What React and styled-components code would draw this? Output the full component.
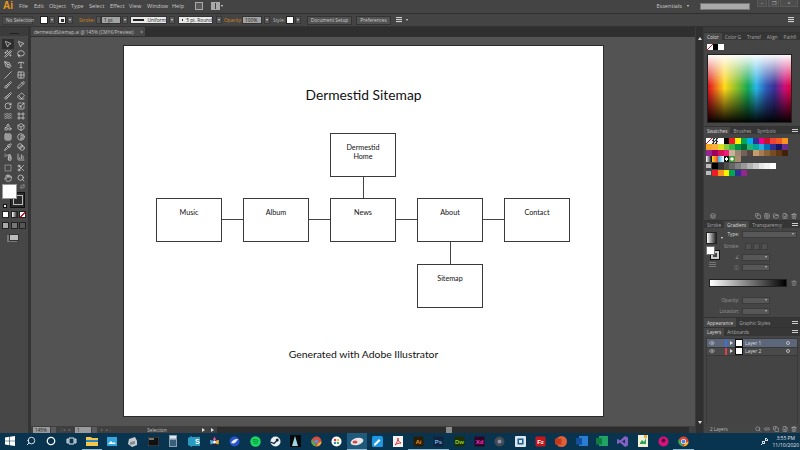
import React from "react";
import styled, { createGlobalStyle } from "styled-components";
import {
  MousePointer2, Wand2, Lasso, PenTool, Type, Slash, Grid2x2, Brush, Pencil, Eraser, RotateCw, Scaling,
  Waves, Frame, Shapes, Box, Grid3x3, Blend, Pipette, Contrast, SprayCan, ChartColumn, SquareDashed,
  Scissors, Hand, Search, Trash2, FilePlus, FolderOpen, Eye, Link2, Layers, Copy, Repeat,
} from "lucide-react";

const Global = createGlobalStyle`
  html, body { margin: 0; padding: 0; width: 800px; height: 450px; overflow: hidden; background: #444; }
  * { box-sizing: border-box; }
  #root { width: 800px; height: 450px; font-family: "Open Sans", "Liberation Sans", sans-serif; }
`;

const Shell = styled.div`display:flex;flex-direction:column;width:800px;height:450px;`;
const MenuBar = styled.div`display:flex;align-items:center;height:14px;background:#444;color:#c9c9c9;font-size:5.6px;border-bottom:1px solid #2f2f2f;padding-bottom:1px;`;
const Logo = styled.span`width:12px;margin:0 4px 0 3px;color:#e8951e;font-family:"Liberation Sans",sans-serif;font-weight:700;font-size:10px;line-height:10px;`;
const MenuItem = styled.span`width:${p => p.$w}px;white-space:nowrap;`;
const MenuIcon = styled.span`display:block;margin-left:${p => p.$ml}px;width:${p => p.$w}px;height:8px;border:1px solid #aaa;background:${p => p.$split ? "linear-gradient(90deg,#aaa 45%,#444 45%,#444 55%,#aaa 55%)" : "#5a5a5a"};`;
const Dot = styled.span`display:block;margin-left:${p => p.$ml || 1}px;width:0;height:0;border-top:2px solid #ddd;border-left:1.5px solid transparent;border-right:1.5px solid transparent;`;
const Spacer = styled.div`flex:1;`;
const SearchBox = styled.span`display:block;margin-left:11px;width:50px;height:7px;background:#a9a9a9;border:1px solid #777;`;
const WinButtons = styled.div`display:flex;gap:1px;align-self:flex-start;margin:0 2px 0 7px;`;
const WinBtn = styled.span`display:flex;align-items:center;justify-content:center;width:${p => p.$w}px;height:7px;background:#4d4d4d;border:1px solid #5a5a5a;border-top:0;color:#bbb;font-size:5px;line-height:5px;`;

const ControlBar = styled.div`display:flex;align-items:center;height:13px;background:#444;color:#c9c9c9;font-size:4.8px;border-bottom:1px solid #333;padding-left:2px;white-space:nowrap;`;
const Selection = styled.span`display:flex;align-items:center;padding-left:3px;width:31px;height:9px;background:#4b4b4b;border:1px solid #3a3a3a;color:#ccc;`;
const Swatch = styled.span`display:block;margin-left:${p => p.$ml}px;width:8px;height:8px;background:#fff;border:1px solid #222;`;
const StrokeSwatch = styled(Swatch)`background:#333;box-shadow:inset 0 0 0 1px #eee;border:1px solid #222;display:flex;align-items:center;justify-content:center;&::after{content:"";width:3px;height:3px;background:#333;border:1px solid #eee;}`;
const Drop = styled.span`display:flex;align-items:center;justify-content:center;margin-left:${p => p.$ml ?? 1}px;width:6px;height:8px;background:#575757;border:1px solid #383838;&::after{content:"";border-top:2px solid #ddd;border-left:1.5px solid transparent;border-right:1.5px solid transparent;}`;
const OrangeLabel = styled.span`margin-left:${p => p.$ml}px;width:${p => p.$w}px;color:#d9861f;`;
const PlainLabel = styled.span`margin-left:${p => p.$ml}px;width:${p => p.$w}px;color:#bbb;`;
const Spinner = styled.span`display:block;margin-left:${p => p.$ml}px;width:5px;height:8px;background:#575757;border:1px solid #383838;`;
const Field = styled.span`display:flex;align-items:center;padding-left:2px;margin-left:${p => p.$ml}px;width:${p => p.$w}px;height:8px;background:${p => p.$light ? "#e8e8e8" : "#a3a3a3"};color:#222;border:1px solid #333;`;
const StrokeLine = styled.span`display:block;width:17px;height:2px;background:#222;margin-right:3px;`;
const RoundDot = styled.span`display:block;width:2px;height:2px;border-radius:50%;background:#111;margin:0 3px 0 1px;`;
const Btn = styled.span`display:flex;align-items:center;justify-content:center;margin-left:${p => p.$ml}px;width:${p => p.$w}px;height:9px;background:#515151;border:1px solid #343434;color:#ccc;`;
const SmallGlyph = styled.span`display:block;margin-left:${p => p.$ml}px;margin-right:${p => p.$mr || 0}px;width:6px;height:6px;background:repeating-linear-gradient(#ccc 0 1px,#555 1px 2px);`;

const Main = styled.div`display:flex;height:406px;`;
const Toolbox = styled.div`width:31px;background:#474747;border-right:3px solid #343434;display:flex;flex-direction:column;align-items:center;`;
const ToolGrip = styled.div`width:28px;height:9px;background:#3b3b3b;display:flex;justify-content:center;align-items:flex-end;padding-bottom:2px;margin-bottom:3px;&::after{content:"";width:9px;height:1px;background:#222;}`;
const ToolGrid = styled.div`display:grid;grid-template-columns:13px 13px;grid-auto-rows:10.3px;align-items:center;justify-items:center;`;
const ToolCell = styled.span`display:flex;align-items:center;justify-content:center;width:12px;height:10px;background:${p => p.$on ? "#2d2d2d" : "transparent"};color:#d2d2d2;`;
const FillStack = styled.div`position:relative;width:24px;height:24px;margin-top:1px;`;
const FillBox = styled.span`position:absolute;left:0;top:0;width:15px;height:15px;background:#fff;border:1px solid #999;z-index:1;`;
const StrokeBox = styled.span`position:absolute;left:8px;top:8px;width:15px;height:16px;background:#2a2a2a;border:1px solid #111;display:flex;align-items:center;justify-content:center;&::after{content:"";width:8px;height:8px;border:1px solid #bbb;background:#2a2a2a;}`;
const SwapGlyph = styled.span`position:absolute;right:1px;top:0;color:#ccc;display:flex;`;
const DefaultGlyph = styled.span`position:absolute;left:1px;bottom:0;width:4px;height:4px;background:#eee;border:1px solid #111;`;
const ModeRow = styled.div`display:flex;gap:1.500px;margin-top:${p => p.$mt}px;`;
const ModeBtn = styled.span`display:block;width:7px;height:7px;background:${p => p.$bg};border:1px solid #222;`;
const ScreenBtn = styled.span`display:block;width:10px;height:7px;margin-top:5px;background:#bbb;border:1px solid #333;box-shadow:-2px 1px 0 #777;`;

const Center = styled.div`width:664px;display:flex;flex-direction:column;`;
const TabStrip = styled.div`height:9px;background:#2f2f2f;display:flex;`;
const DocTab = styled.div`display:flex;align-items:center;justify-content:space-between;width:114px;padding:0 2px 0 3px;background:#484848;color:#c5c5c5;font-size:4.7px;white-space:nowrap;`;
const Canvas = styled.div`flex:1;background:#535353;border-top:1px solid #303030;display:flex;justify-content:flex-start;padding:9px 0 0 93px;`;
const Page = styled.div`position:relative;width:479px;height:370px;background:#fff;box-shadow:0 0 0 1px #2b2b2b;color:#111;font-family:"Lato","Open Sans",sans-serif;`;
const Heading = styled.div`position:absolute;left:0;width:100%;top:${p => p.$y}px;text-align:center;font-size:${p => p.$s}px;line-height:1.2;`;
const Node = styled.div`position:absolute;left:${p => p.$x}px;top:${p => p.$y}px;width:66px;height:44px;border:1px solid #3a3a3a;background:#fff;padding-top:${p => p.$pt}px;text-align:center;font-size:7.2px;line-height:9px;white-space:pre-line;`;
const Wire = styled.div`position:absolute;left:${p => p.$x}px;top:${p => p.$y}px;width:${p => p.$w}px;height:${p => p.$h}px;background:#444;`;
const Status = styled.div`display:flex;align-items:center;height:7px;background:#3f3f3f;color:#c5c5c5;font-size:4.6px;`;
const StatusField = styled.span`display:flex;align-items:center;margin-left:${p => p.$ml}px;padding-left:2px;width:${p => p.$w}px;height:6px;background:#9a9a9a;color:#222;`;
const StatusDrop = styled.span`display:block;margin-left:1px;width:5px;height:6px;background:#5a5a5a;`;
const Nav = styled.span`margin-left:${p => p.$ml}px;width:${p => p.$w}px;color:#777;font-size:4px;letter-spacing:1px;`;
const StatusLabel = styled.span`margin-left:${p => p.$ml}px;width:${p => p.$w}px;text-align:center;`;
const HScroll = styled.div`position:relative;flex:1;height:6px;background:#2c2c2c;margin:0 6px 0 3px;`;
const Thumb = styled.span`position:absolute;left:${p => p.$x}px;top:0;width:6px;height:6px;background:#8a8a8a;`;
const Tri = styled.span`display:block;margin-left:${p => p.$ml}px;width:0;height:0;border-left:3px solid #ddd;border-top:2px solid transparent;border-bottom:2px solid transparent;`;

const VScroll = styled.div`width:8px;background:#303030;border-left:1px solid #3b3b3b;display:flex;flex-direction:column;align-items:center;justify-content:space-between;padding:10px 0 9px;`;
const TriUp = styled.span`display:block;width:0;height:0;border-bottom:3px solid #ddd;border-left:2px solid transparent;border-right:2px solid transparent;`;
const TriDown = styled.span`display:block;width:0;height:0;border-top:3px solid #ddd;border-left:2px solid transparent;border-right:2px solid transparent;`;

const Dock = styled.div`width:97px;background:#3a3a3a;display:flex;flex-direction:column;padding-left:1px;`;
const DockHead = styled.div`height:5px;background:#3b3b3b;`;
const Panel = styled.div`display:flex;flex-direction:column;height:${p => p.$h}px;background:#454545;border-top:1px solid #333;`;
const Tabs = styled.div`display:flex;align-items:stretch;height:${p => p.$h || 7}px;background:#363636;font-size:4.7px;color:#aaa;flex:none;`;
const TabItem = styled.span`display:flex;align-items:center;padding:0 3px;white-space:nowrap;background:${p => p.$on ? "#484848" : "transparent"};color:${p => p.$on ? "#ddd" : "#a8a8a8"};`;
const Burger = styled.span`margin:auto 2px auto auto;width:6px;height:4px;background:repeating-linear-gradient(#ccc 0 1px,transparent 1px 2px);`;
const ChipRow = styled.div`display:flex;margin:4px 0 4px 3px;`;
const Chip = styled.span`display:block;width:5.5px;height:6px;background:${p => p.$c};`;
const NoneChip = styled(Chip)`background:linear-gradient(135deg,#fff 42%,#e01020 42%,#e01020 58%,#fff 58%);`;
const Spectrum = styled.div`width:85px;height:69px;margin-left:3px;border:1px solid #222;
  background:
    linear-gradient(180deg,rgba(255,255,255,.97) 0%,rgba(255,255,255,0) 46%,rgba(0,0,0,0) 50%,rgba(0,0,0,.97) 100%),
    linear-gradient(90deg,#e0101f 0%,#ffd81a 20%,#7fbd2e 36%,#12a857 48%,#29b6e8 58%,#2f5bb8 70%,#3a2f95 80%,#c8107a 92%,#e8003c 100%);`;
const SwatchArea = styled.div`padding:4px 0 0 2px;display:flex;flex-direction:column;gap:.3px;flex:1;`;
const SwatchRow = styled.div`display:flex;margin-top:${p => p.$mt || 0}px;`;
const Cell = styled.span`display:block;width:5.85px;height:5.7px;background:${p => p.$c};`;
const Folder = styled.span`display:block;width:5px;height:4px;margin:1px .85px 0 0;background:#bbb;`;
const PanelFoot = styled.div`display:flex;align-items:center;gap:3px;height:9px;padding:0 3px 0 6px;color:#bbb;flex:none;`;
const FootLabel = styled.span`font-size:4.6px;color:#bbb;margin-right:auto;`;

const GradBody = styled.div`display:flex;flex:1;`;
const GradLeft = styled.div`width:25px;padding:4px 0 0 2px;display:flex;flex-direction:column;`;
const ThumbRow = styled.div`display:flex;align-items:center;gap:3px;`;
const GradThumb = styled.span`display:block;width:11px;height:12px;background:linear-gradient(90deg,#fff,#222);border:1px solid #222;`;
const FillPair = styled.div`position:relative;height:14px;margin-top:2px;`;
const PairFill = styled.span`position:absolute;left:0;top:0;width:9px;height:9px;background:#fff;border:1px solid #777;z-index:1;`;
const PairStroke = styled.span`position:absolute;left:5px;top:5px;width:8px;height:8px;border:2px solid #ccc;outline:1px solid #111;`;
const FlipGlyph = styled.span`display:block;width:7px;height:6px;margin:2px 0 0 3px;background:repeating-linear-gradient(#777 0 1px,#454545 1px 2px);`;
const GradRight = styled.div`flex:1;display:flex;flex-direction:column;font-size:4.6px;color:#a5a5a5;`;
const GradRow = styled.div`display:flex;align-items:center;height:${p => p.$h}px;`;
const GLabel = styled.span`display:flex;justify-content:flex-end;width:10px;margin-right:3px;white-space:nowrap;color:${p => p.$c || "#999"};`;
const GSelect = styled.span`display:flex;justify-content:flex-end;align-items:center;padding-right:2px;width:${p => p.$w}px;height:7px;background:#575757;border:1px solid #3b3b3b;&::after{content:"";border-top:2px solid #bbb;border-left:1.5px solid transparent;border-right:1.5px solid transparent;}`;
const StrokeBtn = styled.span`display:block;width:7px;height:7px;margin-right:1px;background:#515151;border:1px solid #3c3c3c;`;
const StrokeGap = styled.span`display:block;width:3px;`;
const GradBarRow = styled.div`display:flex;align-items:center;margin:0 0 0 -20px;height:21px;color:#999;gap:4px;`;
const GradBar = styled.span`display:block;width:78px;height:8px;border:1px solid #222;background:linear-gradient(90deg,#fff,#000);`;

const LayerList = styled.div`flex:1;margin:2px 2px 0 2px;border:1px solid #3a3a3a;border-bottom:0;background:#444;`;
const LayerRow = styled.div`display:flex;align-items:center;height:8.5px;background:${p => p.$on ? "#5c6779" : "#4a4a4a"};border-bottom:1px solid #383838;color:#ddd;font-size:4.8px;`;
const EyeCell = styled.span`display:flex;justify-content:center;width:9px;color:#ccc;`;
const Bar = styled.span`display:block;width:2px;height:100%;margin-left:9px;background:${p => p.$c};`;
const Thumbnail = styled.span`display:block;width:8px;height:8px;margin:0 2px 0 2px;background:#fff;border:1px solid #111;`;
const Ring = styled.span`display:block;width:4px;height:4px;margin:0 7px 0 auto;border:1px solid #bbb;border-radius:50%;`;

const Taskbar = styled.div`display:flex;align-items:center;height:17px;background:#08344f;color:#e3e3e3;`;
const TaskSlot = styled.span`display:flex;align-items:center;justify-content:center;width:20.42px;height:17px;flex:none;background:${p => p.$active ? "#1f5a7c" : "transparent"};border-bottom:1px solid ${p => p.$open ? "#8fb8cf" : "transparent"};`;
const Tray = styled.span`display:flex;margin:0 3px 0 auto;`;
const Clock = styled.div`margin:0 1px 0 0;text-align:center;font-size:5px;line-height:7px;white-space:nowrap;`;

const Tile = ({ bg, fg = "#fff", t, r = 1 }) => (
  <svg width="11" height="11" viewBox="0 0 11 11"><rect x=".5" y=".5" width="10" height="10" rx={r} fill={bg} />{t && <text x="5.5" y="7.8" fontSize="6" fontFamily="Liberation Sans" fontWeight="700" textAnchor="middle" fill={fg}>{t}</text>}</svg>
);

const taskIcons = [
  <svg width="10" height="10" viewBox="0 0 10 10"><path d="M0 1.4 4.3.8v3.9H0zM4.9.7 10 0v4.7H4.9zM0 5.3h4.3v3.9L0 8.6zM4.9 5.3H10V10l-5.1-.7z" fill="#fff" /></svg>,
  <Search size={10} color="#fff" style={{ transform: "scaleX(-1)" }} />,
  <svg width="10" height="10" viewBox="0 0 10 10"><circle cx="5" cy="5" r="3.7" fill="none" stroke="#fff" strokeWidth="1.3" /></svg>,
  <svg width="11" height="10" viewBox="0 0 11 10"><path d="M3 2h5v6H3zM1 3h1v4H1zM9 3h1v4H9z" fill="none" stroke="#dce6ec" /></svg>,
  <svg width="12" height="11" viewBox="0 0 12 11"><path d="M0 1h5l1 1h6v8H0z" fill="#f4c64a" /><rect y="4" width="12" height="2" fill="#2a86c8" /></svg>,
  <svg width="10" height="9" viewBox="0 0 10 9"><rect width="10" height="9" fill="#35a5dd" /><path d="M1 7l3-3 2 2 1-1 2 2z" fill="#fff" /></svg>,
  <svg width="11" height="11" viewBox="0 0 11 11"><path d="M2 3l6-2 2 4v4l-5 2-4-3z" fill="#c7ccd0" /><path d="M3 6l5-1v3l-5 1z" fill="#7f8a92" /></svg>,
  <svg width="11" height="9" viewBox="0 0 11 9"><rect width="11" height="9" fill="#111" stroke="#999" strokeWidth=".5" /><path d="M1 2h5" stroke="#ddd" strokeWidth="1" /></svg>,
  <svg width="8" height="12" viewBox="0 0 8 12"><rect width="8" height="12" fill="#8aa0ae" /><rect x="1" y="1" width="6" height="2.5" fill="#dfe8ec" /><path d="M1 5h6v6H1z" fill="#38607a" /></svg>,
  <svg width="12" height="11" viewBox="0 0 12 11"><path d="M0 2 4 0v11L0 9zM4 1h8v9H4z" fill="#2a9bc0" /><text x="7" y="8" fontSize="7" fill="#fff" fontFamily="Liberation Sans" fontWeight="700">S</text></svg>,
  <svg width="11" height="11" viewBox="0 0 22 22"><circle cx="11" cy="11" r="10" fill="#202a44" /><path d="M11 1l3 6-3 3-3-3z" fill="#d85bb0" /><path d="M2 8l6 1 1 6-6 2z" fill="#4fb0d8" /><path d="M20 8l-6 1-1 6 6 2z" fill="#e9b640" /><circle cx="11" cy="12" r="3" fill="#fff" /></svg>,
  <svg width="11" height="11" viewBox="0 0 22 22"><circle cx="11" cy="11" r="10" fill="#2b54c8" /><path d="M4 14c4-8 10-8 15-8-3 2-4 6-7 8-2 1-5 1-8 0z" fill="#e7eefc" /></svg>,
  <svg width="11" height="11" viewBox="0 0 22 22"><circle cx="11" cy="11" r="10.5" fill="#1ed760" /><path d="M5 8c4-1 8-1 12 1M6 11.5c3-1 7-1 10 1M7 15c3-1 5-.5 8 .5" stroke="#083" strokeWidth="1.8" fill="none" /></svg>,
  <svg width="11" height="11" viewBox="0 0 22 22"><circle cx="11" cy="11" r="10" fill="#e9eef2" /><circle cx="14.5" cy="8" r="3" fill="#123" /><path d="M1 12l7 3 5-5" stroke="#123" strokeWidth="2.5" fill="none" /></svg>,
  <svg width="11" height="12" viewBox="0 0 11 12"><rect width="11" height="12" fill="#0a0a0a" /><path d="M5 1l3 10H2z" fill="#9fd8e6" /></svg>,
  <svg width="11" height="11" viewBox="0 0 22 22"><circle cx="11" cy="11" r="10" fill="#dd4b39" /><path d="M11 21a10 10 0 0 1-9-15l5 8z" fill="#4caf50" /><path d="M21 11a10 10 0 0 1-10 10l4-7z" fill="#e8b93a" /><circle cx="11" cy="11" r="4" fill="#5a93d8" /></svg>,
  <svg width="11" height="11" viewBox="0 0 22 22"><circle cx="11" cy="11" r="10" fill="#fff" /><circle cx="8" cy="8" r="2.5" fill="#e34" /><circle cx="14" cy="8" r="2.5" fill="#fb3" /><circle cx="14" cy="14" r="2.5" fill="#4a6" /><circle cx="8" cy="14" r="2.5" fill="#38c" /></svg>,
  <svg width="14" height="9" viewBox="0 0 14 9"><ellipse cx="7" cy="4.5" rx="6.5" ry="3.5" fill="#e9e5e5" transform="rotate(-15 7 4.5)" /><ellipse cx="5" cy="5" rx="2.5" ry="1.5" fill="#d64550" /></svg>,
  <svg width="11" height="11" viewBox="0 0 11 11"><rect width="11" height="11" rx="1.5" fill="#1d97e0" /><path d="M2 8l5-5 1.5 1.5-5 5H2z" fill="#fff" /></svg>,
  <svg width="10" height="11" viewBox="0 0 10 11"><rect width="10" height="11" fill="#f5f2f2" /><path d="M2 9c2-2 3-5 3-7 0 3 1 4 3 5-2 0-4 .5-6 2z" fill="none" stroke="#d1252c" strokeWidth=".9" /></svg>,
  <Tile bg="#2a1c07" fg="#e8951e" t="Ai" />,
  <Tile bg="#12233e" fg="#6fb4ea" t="Ps" />,
  <Tile bg="#1d2f06" fg="#91d024" t="Dw" />,
  <Tile bg="#2d0428" fg="#ff2bc2" t="Xd" />,
  <svg width="11" height="11" viewBox="0 0 22 22"><circle cx="11" cy="11" r="10" fill="#454b55" /><circle cx="11" cy="11" r="4" fill="#8b95a5" /></svg>,
  <svg width="11" height="11" viewBox="0 0 11 11"><rect width="11" height="11" rx="1" fill="#dbe6ee" /><rect x="2.5" y="2.5" width="6" height="6" fill="#1a5d88" /><rect x="4" y="4" width="3" height="3" fill="#dbe6ee" /></svg>,
  <Tile bg="#c5161d" fg="#fff" t="Fz" />,
  <svg width="12" height="11" viewBox="0 0 12 11"><circle cx="6.5" cy="5.5" r="5.5" fill="#e0603a" /><rect y="2.5" width="6.5" height="6" fill="#c23a1a" /></svg>,
  <svg width="12" height="10" viewBox="0 0 12 10"><rect x="3" width="9" height="10" fill="#2b7cd3" /><rect y="2" width="6" height="6.5" fill="#134f9c" /></svg>,
  <svg width="12" height="10" viewBox="0 0 12 10"><rect x="3" width="9" height="10" fill="#21a366" /><rect y="2" width="6" height="6.5" fill="#107c41" /></svg>,
  <svg width="11" height="11" viewBox="0 0 11 11"><path d="M8 0l3 1.5v8L8 11 3 6.5 1 8 0 7.5v-4L1 3l2 1.5z" fill="#8661c5" /><path d="M8 3.5 5 5.5l3 2z" fill="#08344f" /></svg>,
  <svg width="10" height="12" viewBox="0 0 10 12"><rect width="10" height="12" fill="#f3f0d8" /><path d="M2 8l2-3 2 2 2-4v6H2z" fill="#2aa05a" /><rect x="6" width="3" height="3" fill="#e8b33a" /></svg>,
  <svg width="11" height="11" viewBox="0 0 22 22"><circle cx="11" cy="11" r="10" fill="#d8127a" /><circle cx="11" cy="9" r="4" fill="#5b0a3d" /></svg>,
  <svg width="11" height="11" viewBox="0 0 22 22"><circle cx="11" cy="11" r="10" fill="#e0432f" /><path d="M11 21a10 10 0 0 1-9-15l5 8z" fill="#34a853" /><path d="M21 11a10 10 0 0 1-10 10l4-7z" fill="#f5c21b" /><circle cx="11" cy="11" r="5" fill="#fff" /><circle cx="11" cy="11" r="3.8" fill="#4285f4" /></svg>,
];
const openIdx = new Set([4, 17, 20, 21, 33]);

const tools = [
  [MousePointer2, MousePointer2], [Wand2, Lasso], [PenTool, Type], [Slash, Grid2x2], [Brush, Pencil],
  [Brush, Eraser], [RotateCw, Scaling], [Waves, Frame], [Shapes, Box], [Grid3x3, Contrast],
  [Pipette, Blend], [SprayCan, ChartColumn], [SquareDashed, Scissors], [Hand, Search],
];

const menus = [["File", 15], ["Edit", 15], ["Object", 22], ["Type", 18], ["Select", 21], ["Effect", 19], ["View", 18], ["Window", 25], ["Help", 11]];
const row1 = ["#000", "#ed1c24", "#fff200", "#00a651", "#00aeef", "#2e3192", "#ec008c", "#c8102e", "#ef4136", "#f15a24", "#f7931e"];
const row2 = ["#f7a823", "#fbb03b", "#d9e021", "#8cc63f", "#39b54a", "#009245", "#006837", "#22b573", "#00a99d", "#29abe2", "#0071bc", "#2e3192", "#1b1464", "#662d91"];
const row3 = ["#93278f", "#9e005d", "#d4145a", "#ed1e79", "#c7b299", "#998675", "#736357", "#534741", "#c69c6d", "#a67c52", "#8c6239", "#754c24", "#603813", "#42210b"];
const row5 = ["#000", "#333", "#4d4d4d", "#666", "#808080", "#999", "#b3b3b3", "#ccc", "#e6e6e6", "#f2f2f2", "#fff"];
const row6 = ["#ed1c24", "#f7931e", "#fff200", "#00a651", "#2e3192", "#93278f"];

const nodes = [
  { x: 206, y: 87, t: "Dermestid\nHome", pt: 9 },
  { x: 32, y: 152, t: "Music", pt: 9 },
  { x: 119, y: 152, t: "Album", pt: 9 },
  { x: 206, y: 152, t: "News", pt: 9 },
  { x: 293, y: 152, t: "About", pt: 9 },
  { x: 380, y: 152, t: "Contact", pt: 9 },
  { x: 293, y: 218, t: "Sitemap", pt: 9 },
];
const wires = [
  { x: 98, y: 173, w: 21, h: 1 }, { x: 185, y: 173, w: 21, h: 1 }, { x: 272, y: 173, w: 21, h: 1 }, { x: 359, y: 173, w: 21, h: 1 },
  { x: 239, y: 131, w: 1, h: 21 }, { x: 326, y: 196, w: 1, h: 22 },
];

export default function App() {
  return (
    <Shell>
      <Global />
      <MenuBar>
        <Logo>Ai</Logo>
        {menus.map(([t, w]) => <MenuItem key={t} $w={w}>{t}</MenuItem>)}
        <MenuIcon $ml={12} $w={8} />
        <MenuIcon $ml={8} $w={9} $split />
        <Dot />
        <Spacer />
        <span>Essentials</span>
        <Dot $ml={5} />
        <SearchBox />
        <WinButtons>
          <WinBtn $w={10}>–</WinBtn>
          <WinBtn $w={11}>❐</WinBtn>
          <WinBtn $w={18}>×</WinBtn>
        </WinButtons>
      </MenuBar>
      <ControlBar>
        <Selection>No Selection</Selection>
        <Swatch $ml={7} />
        <Drop />
        <StrokeSwatch $ml={3} />
        <Drop />
        <OrangeLabel $ml={6} $w={17}>Stroke:</OrangeLabel>
        <Spinner $ml={0} />
        <Field $ml={0} $w={20}>1 pt</Field>
        <Drop />
        <Field $ml={2} $w={37} $light><StrokeLine />Uniform</Field>
        <Drop $ml={2} />
        <Field $ml={3} $w={35} $light><RoundDot />5 pt. Round</Field>
        <Drop $ml={3} />
        <OrangeLabel $ml={2} $w={18}>Opacity:</OrangeLabel>
        <Field $ml={0} $w={20}>100%</Field>
        <Drop $ml={2} />
        <PlainLabel $ml={3} $w={11}>Style:</PlainLabel>
        <Swatch $ml={2} />
        <Drop />
        <Btn $ml={6} $w={45}>Document Setup</Btn>
        <Btn $ml={4} $w={35}>Preferences</Btn>
        <SmallGlyph $ml={5} />
        <Dot $ml={4} />
        <Spacer />
        <SmallGlyph $ml={0} $mr={6} />
      </ControlBar>
      <Main>
        <Toolbox>
          <ToolGrip />
          <ToolGrid>
            {tools.flat().map((I, i) => (
              <ToolCell key={i} $on={i === 0}><I size={8} strokeWidth={2.2} /></ToolCell>
            ))}
          </ToolGrid>
          <FillStack><FillBox /><StrokeBox /><SwapGlyph><Repeat size={5} /></SwapGlyph><DefaultGlyph /></FillStack>
          <ModeRow $mt={3}><ModeBtn $bg="#fff" /><ModeBtn $bg="linear-gradient(90deg,#fff,#222)" /><ModeBtn $bg="linear-gradient(135deg,#fff 40%,#e01020 40%,#e01020 60%,#fff 60%)" /></ModeRow>
          <ModeRow $mt={4}><ModeBtn $bg="#aaa" /><ModeBtn $bg="#777" /><ModeBtn $bg="#555" /></ModeRow>
          <ScreenBtn />
        </Toolbox>
        <Center>
          <TabStrip>
            <DocTab>dermestidSitemap.ai @ 145% (CMYK/Preview)<span>×</span></DocTab>
          </TabStrip>
          <Canvas>
            <Page>
              <Heading $y={41} $s={13.8}>Dermestid Sitemap</Heading>
              {wires.map((w, i) => <Wire key={i} $x={w.x} $y={w.y} $w={w.w} $h={w.h} />)}
              {nodes.map(n => <Node key={n.t} $x={n.x} $y={n.y} $pt={n.pt}>{n.t}</Node>)}
              <Heading $y={302} $s={10.4}>Generated with Adobe Illustrator</Heading>
            </Page>
          </Canvas>
          <Status>
            <StatusField $ml={2} $w={17}>145%</StatusField>
            <StatusDrop />
            <Nav $ml={4} $w={12}>|◂ ◂</Nav>
            <StatusField $ml={3} $w={16}>1</StatusField>
            <StatusDrop />
            <Nav $ml={4} $w={12}>▸ ▸|</Nav>
            <StatusLabel $ml={2} $w={84}>Selection</StatusLabel>
            <Tri $ml={3} />
            <Tri $ml={6} />
            <HScroll><Thumb $x={229} /></HScroll>
          </Status>
        </Center>
        <VScroll><TriUp /><TriDown /></VScroll>
        <Dock>
          <DockHead />
          <Panel $h={94}>
            <Tabs>
              <TabItem $on>Color</TabItem><TabItem>Color G</TabItem><TabItem>Transf</TabItem><TabItem>Align</TabItem><TabItem>Pathfi</TabItem><Burger />
            </Tabs>
            <ChipRow><NoneChip /><Chip $c="#000" /><Chip $c="#fff" /></ChipRow>
            <Spectrum />
          </Panel>
          <Panel $h={94}>
            <Tabs>
              <TabItem $on>Swatches</TabItem><TabItem>Brushes</TabItem><TabItem>Symbols</TabItem><Burger />
            </Tabs>
            <SwatchArea>
              <SwatchRow>
                <Cell $c="linear-gradient(135deg,#fff 42%,#e01020 42%,#e01020 58%,#fff 58%)" />
                <Cell $c="repeating-conic-gradient(#333 0 25%,#ddd 0 50%) 0 0/3px 3px" />
                <Cell $c="#fff" />
                {row1.map((c, i) => <Cell key={i} $c={c} />)}
              </SwatchRow>
              <SwatchRow>{row2.map((c, i) => <Cell key={i} $c={c} />)}</SwatchRow>
              <SwatchRow>{row3.map((c, i) => <Cell key={i} $c={c} />)}</SwatchRow>
              <SwatchRow>
                <Cell $c="linear-gradient(90deg,#fff,#000)" />
                <Cell $c="linear-gradient(90deg,#f7e01e,#ef4136)" />
                <Cell $c="linear-gradient(90deg,#29abe2,#fff)" />
                <Cell $c="radial-gradient(#fff 40%,#111 45%)" />
                <Cell $c="radial-gradient(#fff 35%,#4a9a3a 40%)" />
                <Cell $c="#a98a72" />
              </SwatchRow>
              <SwatchRow $mt={1}><Folder />{row5.map((c, i) => <Cell key={i} $c={c} />)}</SwatchRow>
              <SwatchRow $mt={1}><Folder />{row6.map((c, i) => <Cell key={i} $c={c} />)}</SwatchRow>
            </SwatchArea>
            <PanelFoot>
              <Layers size={6} />
              <Spacer />
              <Copy size={6} /><Grid2x2 size={6} /><FolderOpen size={6} /><FilePlus size={6} /><Trash2 size={6} />
            </PanelFoot>
          </Panel>
          <Panel $h={97}>
            <Tabs>
              <TabItem>Stroke</TabItem><TabItem $on>Gradient</TabItem><TabItem>Transparency</TabItem><Burger />
            </Tabs>
            <GradBody>
              <GradLeft>
                <ThumbRow><GradThumb /><Dot $ml={1} /></ThumbRow>
                <FillPair><PairFill /><PairStroke /></FillPair>
                <FlipGlyph />
              </GradLeft>
              <GradRight>
                <GradRow $h={12}><GLabel $c="#ddd">Type:</GLabel><GSelect $w={55} /></GradRow>
                <GradRow $h={12}><GLabel>Stroke:</GLabel><StrokeGap /><StrokeBtn /><StrokeBtn /><StrokeBtn /></GradRow>
                <GradRow $h={10}><GLabel>∠</GLabel><GSelect $w={28} /></GradRow>
                <GradRow $h={10}><GLabel>◫</GLabel><GSelect $w={28} /></GradRow>
                <GradBarRow><GradBar /><Trash2 size={6} /></GradBarRow>
                <GradRow $h={14}><GLabel>Opacity:</GLabel><GSelect $w={28} /></GradRow>
                <GradRow $h={8}><GLabel>Location:</GLabel><GSelect $w={28} /></GradRow>
              </GradRight>
            </GradBody>
          </Panel>
          <Panel $h={10}>
            <Tabs $h={9}>
              <TabItem $on>Appearance</TabItem><TabItem>Graphic Styles</TabItem><Burger />
            </Tabs>
          </Panel>
          <Panel $h={106}>
            <Tabs $h={8}>
              <TabItem $on>Layers</TabItem><TabItem>Artboards</TabItem><Burger />
            </Tabs>
            <LayerList>
              <LayerRow $on><EyeCell><Eye size={6} /></EyeCell><Bar $c="#3f6fe0" /><Tri $ml={3} /><Thumbnail /><span>Layer 1</span><Ring /></LayerRow>
              <LayerRow><EyeCell><Eye size={6} /></EyeCell><Bar $c="#e0404a" /><Tri $ml={3} /><Thumbnail /><span>Layer 2</span><Ring /></LayerRow>
            </LayerList>
            <PanelFoot>
              <FootLabel>2 Layers</FootLabel>
              <Search size={6} /><Link2 size={6} /><Copy size={6} /><FilePlus size={6} /><Trash2 size={6} />
            </PanelFoot>
          </Panel>
        </Dock>
      </Main>
      <Taskbar>
        {taskIcons.map((ic, i) => <TaskSlot key={i} $active={i === 17} $open={openIdx.has(i)}>{ic}</TaskSlot>)}
        <Tray>
          <svg width="9" height="9" viewBox="0 0 9 9"><path d="M1 8l2-2M3 4l2 2-1 1-2-2zM5 2l2 2 1-1-2-2zM4 5l2-2" fill="none" stroke="#ddd" strokeWidth="1" /></svg>
        </Tray>
        <Clock>3:55 PM<br />11/10/2020</Clock>
      </Taskbar>
    </Shell>
  );
}
